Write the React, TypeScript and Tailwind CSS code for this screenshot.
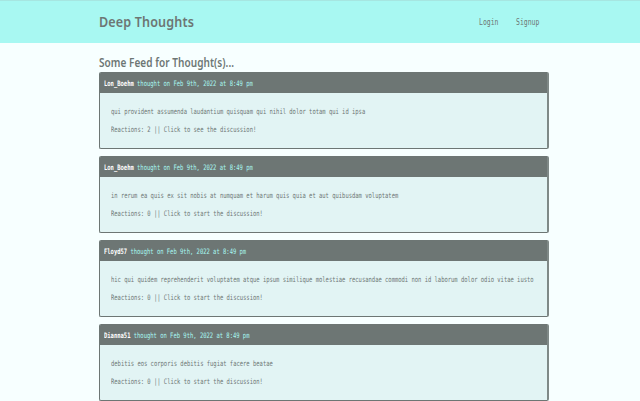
const thoughts = [
  { user: 'Lon_Boehm', text: 'qui provident assumenda laudantium quisquam qui nihil dolor totam qui id ipsa', count: 2, verb: 'see' },
  { user: 'Lon_Boehm', text: 'in rerum ea quis ex sit nobis at numquam et harum quis quia et aut quibusdam voluptatem', count: 0, verb: 'start' },
  { user: 'Floyd57', text: 'hic qui quidem reprehenderit voluptatem atque ipsum similique molestiae recusandae commodi non id laborum dolor odio vitae iusto', count: 0, verb: 'start' },
  { user: 'Dianna51', text: 'debitis eos corporis debitis fugiat facere beatae', count: 0, verb: 'start' },
];

type Thought = (typeof thoughts)[number];

function Card({ user, text, count, verb }: Thought) {
  return (
    <article className="h-[77px] w-[450px] overflow-hidden rounded-[2px] border-r-2 border-b-[1.5px] border-l border-[#6d7674] border-r-[#7f8987] bg-[#e2f4f4]">
      <p className="flex h-[21px] items-center bg-[#6d7674] pt-[2px] pl-[3.5px] text-[#a8f8f2]">
        <span className="origin-left scale-x-[0.7322]">
          <span className="font-bold text-white">{user}</span> thought on Feb 9th, 2022 at 8:49 pm
        </span>
      </p>
      <div className="flex flex-col gap-[8.5px] pt-[13.5px] pl-[11px] leading-[10px] text-[#6d7674]">
        <p className="w-max origin-left scale-x-[0.7312]">{text}</p>
        <p className="w-max origin-left scale-x-[0.7312]">
          Reactions: {count} || Click to {verb} the discussion!
        </p>
      </div>
    </article>
  );
}

export default function App() {
  return (
    <div className="h-[401px] overflow-hidden bg-[#f7ffff] font-['DejaVu_Sans_Mono',monospace] text-[7.5px] whitespace-nowrap text-[#6d7674]">
      <header className="flex h-[43px] items-center justify-between border-t border-[#a6e6e1] bg-[#a8f8f2] pr-[100.2px] pl-[98.5px]">
        <h1 className="w-[95px] origin-left scale-x-[0.875] font-['Noto_Sans',sans-serif] text-[14.4px] leading-[20px] font-semibold tracking-[0.15px]">Deep Thoughts</h1>
        <nav className="flex pt-px text-[8.4px]">
          <a className="w-[37.8px]">
            <span className="inline-block origin-left scale-x-[0.77]">Login</span>
          </a>
          <a className="w-[23.5px]">
            <span className="inline-block origin-left scale-x-[0.77]">Signup</span>
          </a>
        </nav>
      </header>
      <main className="pt-[13px] pl-[99px]">
        <h2 className="h-[16px] w-max origin-left scale-x-[0.865] font-['Noto_Sans',sans-serif] text-[11.6px] leading-[14px] font-semibold tracking-[0.05px]">Some Feed for Thought(s)...</h2>
        <div className="flex flex-col gap-[7px]">
          {thoughts.map((thought) => (
            <Card key={thought.text} {...thought} />
          ))}
        </div>
      </main>
    </div>
  );
}
